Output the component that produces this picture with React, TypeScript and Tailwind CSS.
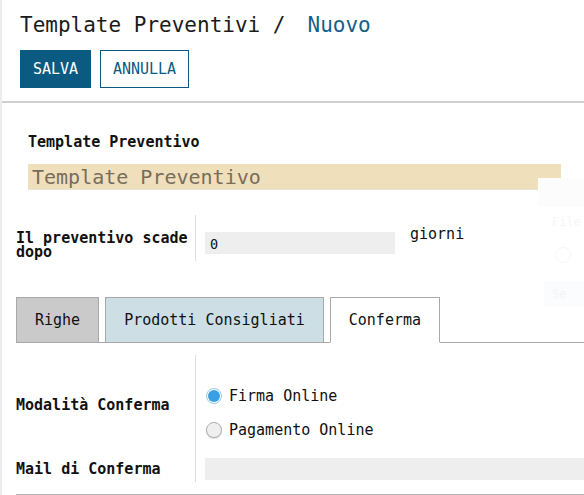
const mono = "font-['DejaVu_Sans_Mono','Liberation_Mono',monospace]"

type RadioProps = { checked?: boolean; label: string }

const Radio = ({ checked, label }: RadioProps) => (
  <label className="flex h-[18px] items-center gap-[7px]">
    {checked ? (
      <span className="flex h-[16px] w-[16px] items-center justify-center rounded-full border border-[#8fc9ef] bg-white">
        <span className="h-[12px] w-[12px] rounded-full bg-[#3a9ee3]" />
      </span>
    ) : (
      <span className="h-[16px] w-[16px] rounded-full border border-[#b0b0b0] bg-[#efefef] shadow-[0_1px_1px_rgba(0,0,0,0.15)]" />
    )}
    <span className="text-[15px] leading-[18px] text-[#111]">{label}</span>
  </label>
)

const tabs = [
  { name: "Righe", cls: "bg-[#cacaca] border-[#a9a9a9]" },
  { name: "Prodotti Consigliati", cls: "bg-[#cddee5] border-[#a9a9a9]" },
  { name: "Conferma", cls: "bg-white border-[#a9a9a9] border-b-white" },
]

export default function App() {
  return (
    <div className={`relative h-[495px] overflow-hidden border-l-2 border-[#ececec] bg-white text-[#111] ${mono}`}>
      {/* header */}
      <header className="h-[103px] border-b-2 border-[#d0d0d0] pl-[18px] pt-[11px]">
        <h1 className="flex h-[28px] items-center text-[21px] leading-[28px] font-normal text-[#1b1b1b]">
          <span>Template Preventivi /</span>
          <span className="ml-[22px] text-[#165f88]">Nuovo</span>
        </h1>
        <div className="mt-[11px] flex gap-[9px]">
          <button className="h-[38px] w-[71px] bg-[#0b5a82] text-[15px] text-white">SALVA</button>
          <button className="h-[38px] w-[89px] border border-[#0b5a82] bg-white text-[15px] text-[#0b5a82]">
            ANNULLA
          </button>
        </div>
      </header>

      {/* nome template */}
      <section className="pl-[26px] pr-[23px] pt-[30px]">
        <div className="h-[18px] text-[15px] leading-[18px] font-bold">Template Preventivo</div>
        <div className="mt-[13px] h-[26px] border-b border-[#e9e4da] bg-[#f0dfbb] pl-[4px] text-[20px] leading-[26px] text-[#776d5c]">
          Template Preventivo
        </div>
      </section>

      {/* scadenza */}
      <section className="mt-[25px] flex h-[46px] pl-[14px]">
        <div className="w-[180px] border-r border-[#dcdcdc] pt-[17px] text-[15px] leading-[13.5px] font-bold">
          Il preventivo scade dopo
        </div>
        <div className="flex pl-[9px] pt-[17px]">
          <div className="h-[22px] w-[190px] bg-[#eeeeee] pl-[5px] pt-[2px] text-[13.5px] leading-[20px]">0</div>
          <div className="ml-[15px] -mt-[7px] text-[15px] leading-[18px]">giorni</div>
        </div>
      </section>

      {/* tabs */}
      <nav className="ml-[14px] mt-[36px] flex h-[46px] border-b border-[#a9a9a9]">
        {tabs.map((tab, i) => (
          <div
            key={tab.name}
            className={`-mb-px flex h-[46px] items-center border px-[18px] text-[15px] ${tab.cls} ${i > 0 ? "ml-[6px]" : ""}`}
          >
            {tab.name}
          </div>
        ))}
      </nav>

      {/* conferma */}
      <section className="mt-[12px] ml-[14px] grid grid-cols-[180px_1fr]">
        <div className="flex h-[100px] items-center border-r border-[#dcdcdc] text-[15px] font-bold">
          Modalità Conferma
        </div>
        <div className="flex flex-col gap-[16px] pl-[10px] pt-[32px]">
          <Radio checked label="Firma Online" />
          <Radio label="Pagamento Online" />
        </div>
        <div className="flex h-[27px] items-center border-r border-[#dcdcdc] pt-[2px] text-[15px] font-bold">
          Mail di Conferma
        </div>
        <div className="pl-[9px] pt-[3px]">
          <div className="h-[22px] bg-[#eeeeee]" />
        </div>
      </section>
      <div className="ml-[14px] mt-[12px] border-t-2 border-[#b4b4b4]" />

      {/* faint overlay remnants on the right */}
      <div className="absolute left-[536px] top-[178px] h-[29px] w-[60px] bg-[#fcfcfc]" />
      <div className="absolute left-[550px] top-[213px] text-[12px] text-[#f6f6f6]">File</div>
      <div className="absolute left-[553px] top-[247px] h-[16px] w-[16px] rounded-full border border-[#f6f6f6]" />
      <div className="absolute left-[542px] top-[281px] h-[26px] w-[50px] bg-[#fbfcfd] pl-[8px] text-[12px] leading-[26px] text-[#f2f5f7]">
        Se
      </div>
    </div>
  )
}
